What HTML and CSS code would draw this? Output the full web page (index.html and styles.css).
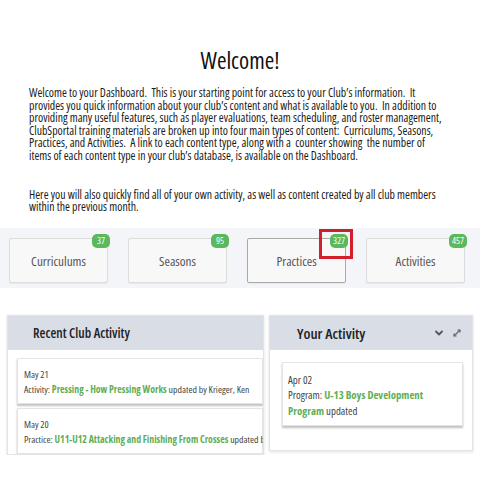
FILE: index.html
```html
<!DOCTYPE html>
<html>
<head>
<meta charset="utf-8">
<link rel="stylesheet" href="styles.css">
</head>
<body>
<section class="intro">
  <h1 class="title">Welcome!</h1>
  <p class="para">Welcome to your Dashboard.&nbsp; This is your starting point for access to your Club’s information.&nbsp; It<br>provides you quick information about your club’s content and what is available to you.&nbsp; In addition to<br>providing many useful features, such as player evaluations, team scheduling, and roster management,<br>ClubSportal training materials are broken up into four main types of content:&nbsp; Curriculums, Seasons,<br>Practices, and Activities.&nbsp; A link to each content type, along with a&nbsp; counter showing&nbsp; the number of<br>items of each content type in your club’s database, is available on the Dashboard.</p>
  <p class="para">Here you will also quickly find all of your own activity, as well as content created by all club members<br>within the previous month.</p>
</section>

<section class="tiles">
  <div class="tile"><span class="tile-label">Curriculums</span><span class="badge">37</span></div>
  <div class="tile"><span class="tile-label">Seasons</span><span class="badge">95</span></div>
  <div class="tile tile-active"><span class="tile-label">Practices</span><span class="badge">327</span><span class="highlight"></span></div>
  <div class="tile"><span class="tile-label">Activities</span><span class="badge">457</span></div>
</section>

<section class="panels">
  <div class="panel panel-recent">
    <div class="panel-head"><span class="panel-title">Recent Club Activity</span></div>
    <div class="panel-body">
      <div class="card">
        <div class="date">May 21</div>
        <div class="line">Activity: <span class="link">Pressing - How Pressing Works</span> updated by Krieger, Ken</div>
      </div>
      <div class="card">
        <div class="date">May 20</div>
        <div class="line">Practice: <span class="link">U11-U12 Attacking and Finishing From Crosses</span> updated by Krieger, Ken</div>
      </div>
    </div>
  </div>
  <div class="panel panel-mine">
    <div class="panel-head">
      <span class="panel-title">Your Activity</span>
      <span class="tools">
        <svg class="icon" width="10" height="10" viewBox="0 0 10 10"><path d="M2 3.5 L5 6.5 L8 3.5" fill="none" stroke="#555" stroke-width="1.8" stroke-linecap="round" stroke-linejoin="round"/></svg>
        <svg class="icon" width="10" height="10" viewBox="0 0 10 10"><path d="M2 8 L8 2" stroke="#666" stroke-width="1.2"/><path d="M5.5 2 H8 V4.5" fill="none" stroke="#666" stroke-width="1.2"/><path d="M2 5.5 V8 H4.5" fill="none" stroke="#666" stroke-width="1.2"/></svg>
      </span>
    </div>
    <div class="panel-body">
      <div class="card card-mine">
        <div class="date">Apr 02</div>
        <div class="wrap">Program: <span class="link">U-13 Boys Development Program</span> updated</div>
      </div>
    </div>
  </div>
</section>
</body>
</html>
```
FILE: styles.css
```css
* { box-sizing: border-box; }
body {
  margin: 0;
  background: #ffffff;
  color: #222;
  font-family: "Open Sans", sans-serif;
  font-stretch: 85%;
}
.intro {
  padding: 46px 0 0 29px;
}
.title {
  margin: 0;
  padding-right: 29px;
  text-align: center;
  font-weight: 400;
  font-size: 23px;
  line-height: 28px;
  color: #111;
  font-stretch: 80%;
}
.para {
  margin: 12px 0 0 0;
  font-size: 11.8px;
  line-height: 12.6px;
  color: #1a1a1a;
  white-space: nowrap;
  font-stretch: 80%;
}
.para + .para {
  margin-top: 26px;
}

.tiles {
  margin-top: 15px;
  background: #f4f5f8;
  display: flex;
  gap: 20px;
  padding: 10px 0 5px 9px;
  height: 60px;
}
.tile {
  position: relative;
  width: 99px;
  height: 45px;
  background: #f8f8f8;
  border: 1px solid #dcdcdc;
  border-radius: 2px;
  box-shadow: 0 1px 1px rgba(0,0,0,0.05);
  display: flex;
  align-items: center;
  justify-content: center;
}
.tile-active {
  border-color: #a9a9a9;
}
.tile-label {
  font-size: 13.2px;
  color: #555;
  padding-top: 2px;
}
.badge {
  position: absolute;
  top: -5px;
  right: -3px;
  min-width: 18px;
  height: 14px;
  padding: 0 3px;
  border-radius: 5px;
  background: #5cb85c;
  color: #fff;
  font-size: 9.5px;
  line-height: 14px;
  text-align: center;
}
.highlight {
  position: absolute;
  top: -10px;
  right: -8px;
  width: 34px;
  height: 30px;
  border: 3px solid #d21f2b;
}

.panels {
  display: flex;
  gap: 5px;
  padding: 27px 0 0 7px;
  align-items: flex-start;
}
.panel {
  background: #fff;
  border: 1px solid #e1e3e8;
  box-shadow: 0 1px 3px rgba(0,0,0,0.12);
  overflow: hidden;
}
.panel-recent {
  width: 257px;
  height: 140px;
}
.panel-mine {
  width: 204px;
  height: 136px;
}
.panel-head {
  height: 34px;
  background: #d9dde6;
  display: flex;
  align-items: center;
  justify-content: space-between;
  padding: 0 10px 0 25px;
}
.panel-title {
  font-size: 13.5px;
  font-weight: 600;
  color: #222;
}
.panel-mine .panel-title {
  font-size: 15px;
  padding-left: 2px;
}
.tools {
  display: flex;
  gap: 8px;
  align-items: center;
}
.icon { display: block; }
.panel-recent .panel-body {
  padding: 8px 0 0 9px;
}
.panel-mine .panel-body {
  padding: 12px 9px 0 12px;
}
.card {
  background: #fff;
  border: 1px solid #e4e4e4;
  box-shadow: 0 2px 2px rgba(0,0,0,0.25);
  padding: 8px 6px 0 6px;
  height: 46px;
  margin-bottom: 4px;
  font-size: 9.8px;
  line-height: 15px;
  color: #444;
  white-space: nowrap;
}
.card-mine {
  height: 64px;
  padding: 9px 6px 0 5px;
  white-space: normal;
  font-size: 10.8px;
  line-height: 15.5px;
}
.link {
  color: #5fae57;
  font-weight: 700;
}
.wrap { width: 150px; }
```
